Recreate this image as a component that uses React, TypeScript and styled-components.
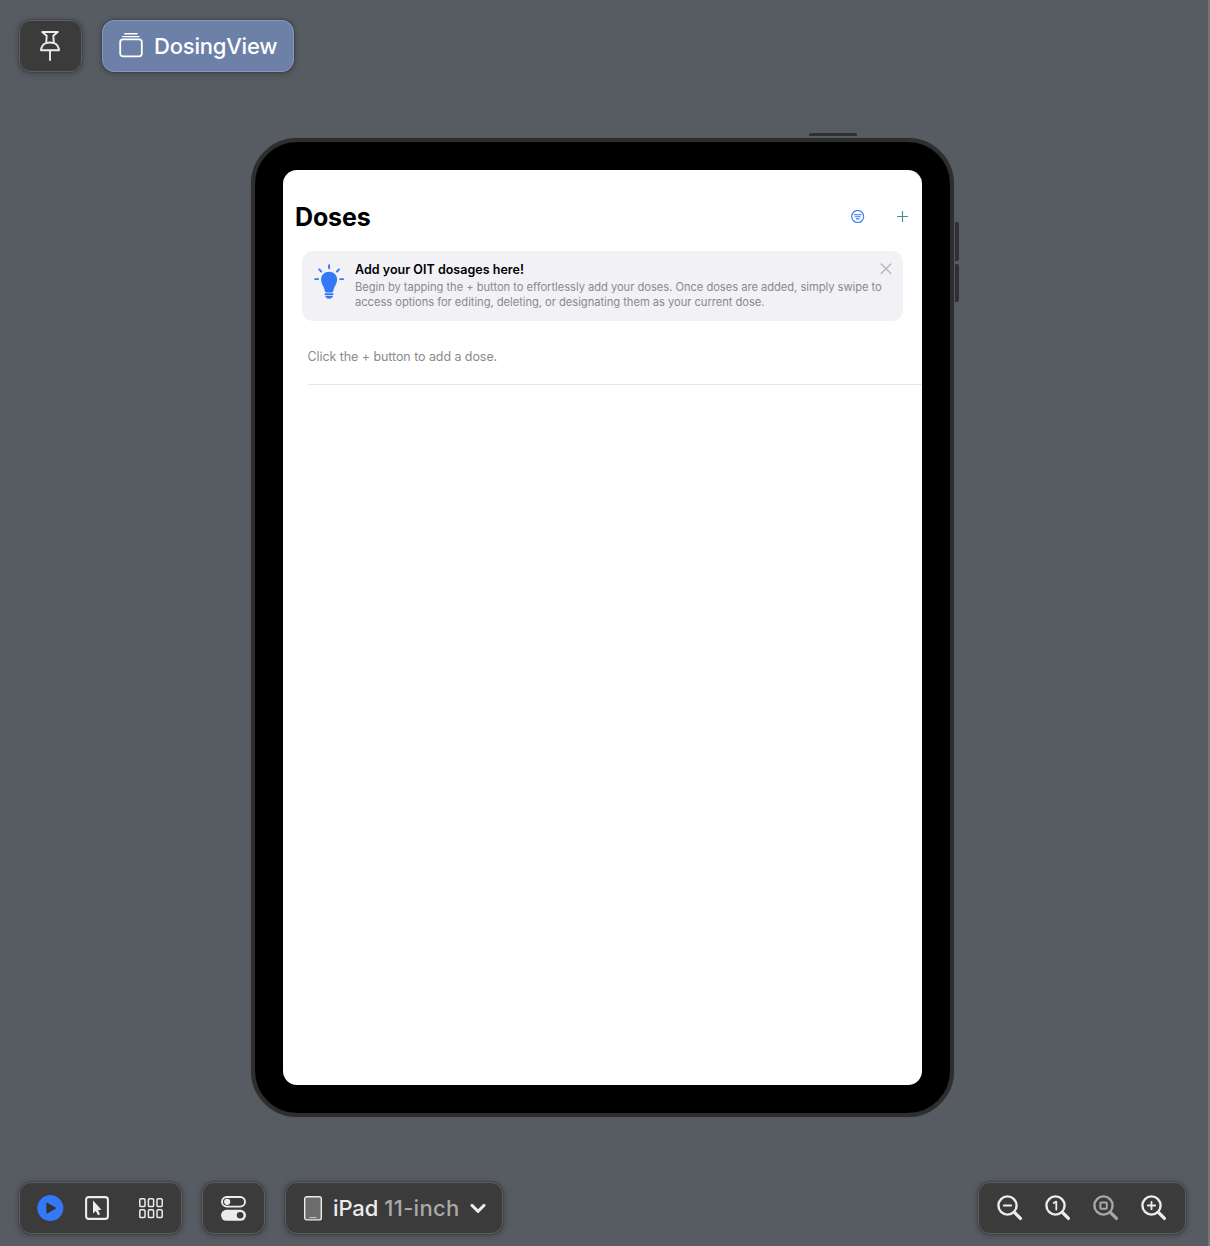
import React from "react";
import styled, { createGlobalStyle, css } from "styled-components";

const GlobalStyle = createGlobalStyle`
  *, *::before, *::after { box-sizing: border-box; }
  body { margin: 0; background: #575b62; }
  svg { display: block; flex: none; }
`;

const Canvas = styled.main`
  width: 1210px;
  height: 1246px;
  display: flex;
  flex-direction: column;
  background: #575b62;
  border-right: 2px solid #737777;
  overflow: hidden;
  font-family: Inter, "Liberation Sans", sans-serif;
  -webkit-font-smoothing: antialiased;
`;

const TopBar = styled.header`
  display: flex;
  gap: 20px;
  padding: 20px 20px 0 19px;
  height: 138px;
`;

const surface = css`
  height: 52px;
  display: flex;
  align-items: center;
  border: 1px solid #5d5e60;
  border-radius: 12px;
  background: #3b3b3b;
  box-shadow: 0 0 0 1px rgba(45, 47, 50, 0.3), 0 1px 6px rgba(0, 0, 0, 0.3);
  color: #ececec;
`;

const ToolButton = styled.button<{ $inset?: number }>`
  ${surface}
  width: 63px;
  justify-content: center;
  padding: 0 ${(p) => p.$inset ?? 0}px 0 0;
  font: inherit;
`;

const PreviewTab = styled.button`
  ${surface}
  width: 192px;
  padding: 0 0 0 16px;
  gap: 11px;
  background: #6c80a8;
  border-color: #8799bb;
  color: #fff;
  font: 500 22px/28px Inter, sans-serif;
  letter-spacing: -0.2px;
`;

const Stage = styled.section`
  flex: 1;
  display: flex;
  justify-content: center;
  padding-right: 4px;
`;

const Device = styled.div`
  position: relative;
  width: 703px;
  height: 979px;
  padding: 28px;
  border: 4px solid #2d2e2e;
  border-radius: 46px;
  background: #000;
  box-shadow: inset 0 0 1px #1c1c1c, 0 0 1px #404244;
`;

const HardwareKey = styled.span<{ $side: "top" | "right"; $offset: number; $length: number }>`
  position: absolute;
  background: #2f3031;
  ${(p) =>
    p.$side === "top"
      ? css`top: -9px; left: ${p.$offset}px; width: ${p.$length}px; height: 3px; border-radius: 2px 2px 0 0;`
      : css`right: -9px; top: ${p.$offset}px; height: ${p.$length}px; width: 4px; border-radius: 0 2px 2px 0;`}
`;

const Screen = styled.div`
  width: 639px;
  height: 915px;
  border-radius: 14px;
  background: #fff;
  overflow: hidden;
`;

const NavBar = styled.div`
  height: 81px;
  padding: 12px 14px 0 12.5px;
  display: flex;
  align-items: center;
`;

const Title = styled.h1`
  flex: 1;
  margin: 0;
  color: #000;
  font-size: 25px;
  line-height: 30px;
  font-weight: 700;
  letter-spacing: -0.15px;
`;

const NavActions = styled.div`
  display: flex;
  align-items: center;
  gap: 32px;
`;

const TipCard = styled.article`
  width: 601px;
  height: 70px;
  margin-left: 19px;
  padding: 10px 11px 0 12px;
  display: flex;
  align-items: flex-start;
  border-radius: 11px;
  background: #f2f1f6;
`;

const TipIcon = styled.div`
  flex: 0 0 41.5px;
  padding-top: 3px;
`;

const TipBody = styled.div`
  flex: 1;
  min-width: 0;
  white-space: nowrap;
`;

const TipTitle = styled.h2`
  margin: 0;
  color: #000;
  font-size: 12.5px;
  line-height: 17px;
  font-weight: 600;
  letter-spacing: 0.02px;
`;

const TipText = styled.p`
  margin: 0;
  padding-top: 2px;
  color: #8a8a8e;
  font-size: 11.2px;
  line-height: 15.4px;
  letter-spacing: -0.045px;
`;

const Dismiss = styled.div`
  flex: none;
  padding-top: 2px;
`;

const EmptyRow = styled.div`
  margin-left: 25px;
  height: 64px;
  padding-top: 26.5px;
  border-bottom: 1px solid #e6e6e8;
  color: #8a8a8e;
  font-size: 12.5px;
  line-height: 18px;
  letter-spacing: -0.07px;
`;

const BottomBar = styled.footer`
  display: flex;
  height: 64px;
  padding: 0 22px 0 19px;
`;

const ModeGroup = styled.div`
  ${surface}
  width: 163px;
  padding-left: 16.5px;
`;

const IconSlot = styled.span<{ $before?: number }>`
  margin-left: ${(p) => p.$before ?? 0}px;
`;

const BarGroup = styled.div`
  display: flex;
  gap: 20px;
`;

const DevicePicker = styled.button`
  ${surface}
  width: 218px;
  padding: 0 0 0 18px;
  font: 500 22px/28px Inter, sans-serif;
`;

const DeviceName = styled.span`
  margin-left: 11px;
  letter-spacing: -0.1px;
`;

const DeviceSize = styled.span`
  color: #a9a9a9;
  letter-spacing: 0.3px;
  margin: 0 10px 0 6px;
  white-space: nowrap;
`;

const ZoomGroup = styled.div`
  ${surface}
  width: 208px;
  margin-left: auto;
  padding-left: 17.5px;
  gap: 22px;
`;

const PinIcon = () => (
  <svg width="20" height="30" viewBox="0 0 20 30" fill="none" stroke="currentColor" strokeWidth="1.9" strokeLinecap="round" strokeLinejoin="round">
    <path d="M2.2 1H17.8L13.3 4.8L13.8 11.8C16.8 13.1 18.7 15.8 19 19.3H1C1.3 15.8 3.2 13.1 6.2 11.8L6.7 4.8Z" />
    <path d="M6.2 12.1C8.5 11.3 11.5 11.3 13.8 12.1M10 19.5V29" />
  </svg>
);

const StackIcon = () => (
  <svg width="24" height="26" viewBox="0 0 24 26" fill="none" stroke="currentColor" strokeLinecap="round">
    <rect x="1.2" y="6.4" width="21.6" height="17" rx="2.8" strokeWidth="1.8" />
    <path d="M3.7 3.6H20M5.8 .8H18" strokeWidth="1.4" />
  </svg>
);

const FilterIcon = () => (
  <svg width="14" height="14" viewBox="0 0 14 14" fill="none" stroke="#3478f6" strokeLinecap="round">
    <circle cx="6.7" cy="6.5" r="6" strokeWidth="1.1" />
    <path d="M3.2 4.7H10.2M4.3 6.8H9.1M5.4 8.9H8" strokeWidth="1.1" />
  </svg>
);

const PlusIcon = () => (
  <svg width="11" height="11" viewBox="0 0 11 11" stroke="#4a8c8c" strokeWidth="1.15" strokeLinecap="round">
    <path d="M5.5 .5V10.5M.5 5.5H10.5" />
  </svg>
);

const BulbIcon = () => (
  <svg width="30" height="36" viewBox="0 0 30 36" fill="#3478f6">
    <path d="M7.1 15.4C7.1 11 10.6 7.8 15.1 7.8S23.1 11 23.1 15.4C23.1 20 19.9 22.2 19.4 26.7Q19.2 28.5 17.6 28.5H12.6Q11 28.5 10.8 26.7C10.3 22.2 7.1 20 7.1 15.4Z" />
    <path d="M10.8 29.3H19.4V31H10.8ZM11.1 31.7H19.1Q18.4 34.7 15.1 34.7T11.1 31.7Z" />
    <path d="M15.1 1.2V4.2M5.2 5.4L7.2 7.5M25 5.4L23 7.5M1.1 15.1H4.1M26.1 15.1H29.1" fill="none" stroke="#3478f6" strokeWidth="1.9" strokeLinecap="round" />
  </svg>
);

const CloseIcon = () => (
  <svg width="12" height="12" viewBox="0 0 12 12" stroke="#b8b7bc" strokeWidth="1.4" strokeLinecap="round">
    <path d="M1.2 1L10.8 10.6M10.8 1L1.2 10.6" />
  </svg>
);

const PlayIcon = () => (
  <svg width="27" height="27" viewBox="0 0 27 27">
    <circle cx="13.3" cy="13.1" r="13" fill="#3478f6" />
    <path d="M10 8.3L18.3 13.1L10 17.9Z" fill="#333" stroke="#333" strokeWidth="1.3" strokeLinejoin="round" />
  </svg>
);

const SelectIcon = () => (
  <svg width="24" height="24" viewBox="0 0 24 24">
    <rect x="1.1" y="1.1" width="21.8" height="21.8" rx="2.6" fill="none" stroke="currentColor" strokeWidth="2.1" />
    <path d="M8 4.6V17.4L10.8 15L13 19.2L15 18.2L13.1 14.1L16.5 13.8Z" fill="currentColor" />
  </svg>
);

const VariantsIcon = () => (
  <svg width="24" height="21" viewBox="0 0 24 21" fill="none" stroke="currentColor" strokeWidth="1.5">
    {[0, 11].map((y) => [0, 8.6, 17.2].map((x) => (
      <rect key={`${x}-${y}`} x={x + 0.8} y={y + 0.8} width="5.2" height="7.8" rx="1.2" />
    )))}
  </svg>
);

const SettingsIcon = () => (
  <svg width="25" height="25" viewBox="0 0 25 25">
    <rect x="1" y="1" width="23" height="9.6" rx="4.8" fill="none" stroke="currentColor" strokeWidth="1.9" />
    <circle cx="6.2" cy="5.8" r="3.1" fill="currentColor" />
    <rect x="0" y="13.8" width="25" height="11" rx="5.5" fill="currentColor" />
    <circle cx="19.1" cy="19.3" r="3.3" fill="#3b3b3b" />
  </svg>
);

const TabletIcon = () => (
  <svg width="18" height="25" viewBox="0 0 18 25">
    <rect x=".7" y=".8" width="16.6" height="23.1" rx="2" fill="#6c6c6c" stroke="currentColor" strokeWidth="1.4" />
    <path d="M6 21.5H12" stroke="#c7c7c7" strokeWidth="1.2" strokeLinecap="round" />
  </svg>
);

const ChevronIcon = () => (
  <svg width="16" height="11" viewBox="0 0 16 11" fill="none" stroke="currentColor" strokeWidth="2.9" strokeLinecap="round" strokeLinejoin="round">
    <path d="M2 2.4L8 8.4L14 2.4" />
  </svg>
);

const Magnifier = ({ mark, color = "currentColor" }: { mark: React.ReactNode; color?: string }) => (
  <svg width="26" height="26" viewBox="0 0 26 26" fill="none" stroke={color} strokeLinecap="round" strokeLinejoin="round">
    <circle cx="10.5" cy="10.5" r="9.1" strokeWidth="2.4" />
    <path d="M17.4 17.4L23.4 23.4" strokeWidth="3.3" />
    {mark}
  </svg>
);

export default function App() {
  return (
    <Canvas>
      <GlobalStyle />
      <TopBar>
        <ToolButton aria-label="Pin" $inset={2}><PinIcon /></ToolButton>
        <PreviewTab><StackIcon />DosingView</PreviewTab>
      </TopBar>
      <Stage>
        <Device>
          <HardwareKey $side="top" $offset={554} $length={48} />
          <HardwareKey $side="right" $offset={80} $length={39} />
          <HardwareKey $side="right" $offset={122} $length={38} />
          <Screen>
            <NavBar>
              <Title>Doses</Title>
              <NavActions><FilterIcon /><PlusIcon /></NavActions>
            </NavBar>
            <TipCard>
              <TipIcon><BulbIcon /></TipIcon>
              <TipBody>
                <TipTitle>Add your OIT dosages here!</TipTitle>
                <TipText>
                  Begin by tapping the + button to effortlessly add your doses. Once doses are added, simply swipe to
                  <br />
                  access options for editing, deleting, or designating them as your current dose.
                </TipText>
              </TipBody>
              <Dismiss><CloseIcon /></Dismiss>
            </TipCard>
            <EmptyRow>Click the + button to add a dose.</EmptyRow>
          </Screen>
        </Device>
      </Stage>
      <BottomBar>
        <BarGroup>
          <ModeGroup>
            <IconSlot><PlayIcon /></IconSlot>
            <IconSlot $before={21.5}><SelectIcon /></IconSlot>
            <IconSlot $before={30}><VariantsIcon /></IconSlot>
          </ModeGroup>
          <ToolButton aria-label="Device settings"><SettingsIcon /></ToolButton>
          <DevicePicker>
            <TabletIcon />
            <DeviceName>iPad</DeviceName>
            <DeviceSize>11-inch</DeviceSize>
            <ChevronIcon />
          </DevicePicker>
        </BarGroup>
        <ZoomGroup>
          <Magnifier mark={<path d="M6.8 10.5H14.2" strokeWidth="1.9" />} />
          <Magnifier mark={<path d="M8.7 8L11.3 6.6V14.5" strokeWidth="1.8" />} />
          <Magnifier color="#a7a7a7" mark={<rect x="7.4" y="7.4" width="6.4" height="6.4" rx=".8" strokeWidth="2" />} />
          <Magnifier mark={<path d="M6.8 10.5H14.2M10.5 6.8V14.2" strokeWidth="1.8" />} />
        </ZoomGroup>
      </BottomBar>
    </Canvas>
  );
}
